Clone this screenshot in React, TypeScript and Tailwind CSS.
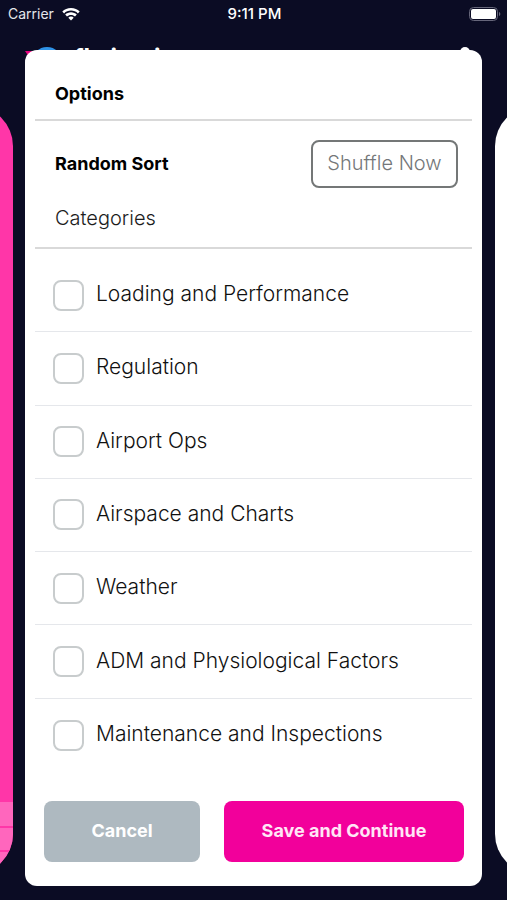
import { FC, useState } from 'react';

const categories = [
  'Loading and Performance',
  'Regulation',
  'Airport Ops',
  'Airspace and Charts',
  'Weather',
  'ADM and Physiological Factors',
  'Maintenance and Inspections',
];


// ~ ~ ~ ~ ~ ~ ~ ~ ~ ~ ~ ~ ~ ~ ~ ~ ~ ~ ~ ~ ~ ~ Status bar

const StatusBar:FC = () => (
  <div className="grid grid-cols-3 items-center h-7 pl-2 pr-1.5 text-sm text-white">
    <div className="flex items-center gap-2">
      <span className="text-gray-200">Carrier</span>
      <svg viewBox="0 0 18 13" className="w-[18px] h-[13px]" fill="currentColor" aria-hidden="true">
        <path d="M9 0C5.500 0 2.400 1.300 0.300 3.500L2.100 5.400C3.900 3.600 6.300 2.600 9 2.600s5.100 1 6.900 2.800l1.800-1.900C15.600 1.300 12.500 0 9 0z" />
        <path d="M9 4.300c-2.300 0-4.300.9-5.800 2.300L5 8.500c1-1 2.400-1.600 4-1.600s3 .6 4 1.600l1.800-1.900C13.300 5.200 11.300 4.300 9 4.300z" />
        <path d="M9 8.600c-1.100 0-2 .4-2.700 1.100L9 12.600l2.700-2.900C11 9 10.100 8.600 9 8.600z" />
      </svg>
    </div>
    <span className="text-center text-[15px] font-medium">9:11 PM</span>
    <svg viewBox="0 0 32 15" className="w-8 h-[15px] justify-self-end" aria-hidden="true">
      <rect x="0.500" y="0.500" width="28" height="13" rx="4" fill="none" stroke="#66667a" />
      <rect x="2" y="2" width="25" height="10" rx="2" fill="#fff" />
      <path d="M30 5v4c.8-.3 1.300-1 1.300-2s-.5-1.700-1.300-2z" fill="#66667a" />
    </svg>
  </div>
);


// ~ ~ ~ ~ ~ ~ ~ ~ ~ ~ ~ ~ ~ ~ ~ ~ ~ ~ ~ ~ ~ ~ Card deck behind the dialog

const Deck:FC = () => (
  <div className="flex flex-1 flex-col">
    <header className="flex items-center justify-between h-14 pl-6 pr-7">
      <div className="flex items-center gap-3">
        <svg viewBox="0 0 38 36" className="w-[38px] h-9" aria-hidden="true">
          <path d="M1 13h10L7 22z" fill="#e6007e" />
          <circle cx="23" cy="24" r="15" fill="#2f93e8" />
        </svg>
        <span className="pt-1 text-2xl font-bold text-white">fly institute</span>
      </div>
      <svg viewBox="0 0 28 28" className="size-7" fill="#fff" aria-hidden="true">
        <circle cx="14" cy="10" r="5" />
        <path d="M4 26c0-6 4-9 10-9s10 3 10 9z" />
      </svg>
    </header>
    <div className="flex flex-1 justify-between pt-[22px] pb-[26px]">
      <div className="-ml-[83px] flex w-24 flex-col justify-end overflow-hidden rounded-[40px] bg-[#ff36a8]">
        <div className="h-6 bg-[#ff66bd]" />
        <div className="h-6 border-t-2 border-[#ff36a8] bg-[#ff66bd]" />
        <div className="h-6 border-t-2 border-[#ff36a8] bg-[#ff66bd]" />
      </div>
      <div className="-mr-[84px] w-24 rounded-[40px] bg-white" />
    </div>
  </div>
);


// ~ ~ ~ ~ ~ ~ ~ ~ ~ ~ ~ ~ ~ ~ ~ ~ ~ ~ ~ ~ ~ ~ Options dialog

const OptionsDialog:FC = () => {
  const [selected, setSelected] = useState<string[]>([]);

  const toggle = (name: string) => {
    setSelected(selected.includes(name)
      ? selected.filter(item => item !== name)
      : [...selected, name]);
  };

  return (
    <form
      role="dialog"
      aria-labelledby="options-title"
      className="absolute inset-x-[25px] top-[50px] bottom-[14px] flex flex-col rounded-xl bg-white px-[10px] text-black"
      onSubmit={e => e.preventDefault()}
      >
      <h1 id="options-title" className="border-b-2 border-[#d9d9d9] px-5 pt-8 pb-[13px] text-lg leading-6 font-bold">
        Options
      </h1>

      <div className="flex items-center justify-between pt-[19px] pr-[14px] pl-5">
        <h2 className="text-lg leading-6 font-bold">Random Sort</h2>
        <button type="button" className="h-12 w-[147px] rounded-lg border-2 border-[#747777] pb-[2px] text-xl font-light text-[#747779]">
          Shuffle Now
        </button>
      </div>

      <fieldset className="flex flex-1 flex-col">
        <legend className="w-full border-b-2 border-[#d9d9d9] px-5 pt-4 pb-[15px] text-xl font-light text-[#1c1c1c]">
          Categories
        </legend>
        <ul className="grid flex-1 auto-rows-fr pt-[10px] divide-y divide-gray-200">
          {categories.map(name => (
            <li key={name} className="flex">
              <label className="flex flex-1 items-center gap-3 px-[18px] text-[21px] leading-7 font-light text-[#111]">
                <input
                  type="checkbox"
                  checked={selected.includes(name)}
                  onChange={() => toggle(name)}
                  className="size-[31px] appearance-none rounded-lg border-2 border-[#c8cccd] checked:bg-[#f2009b]"
                />
                <span className="pb-[2px]">{name}</span>
              </label>
            </li>
          ))}
        </ul>
      </fieldset>

      <div className="flex gap-6 pt-[29px] pr-2 pb-6 pl-[9px] text-lg font-bold text-white">
        <button type="button" className="h-[61px] flex-[156] rounded-lg bg-[#aeb9c0] pb-[2px]">Cancel</button>
        <button type="submit" className="h-[61px] flex-[240] rounded-lg bg-[#f2009b] pb-[2px] text-[#ffe6f6]">Save and Continue</button>
      </div>
    </form>
  );
};


// ~ ~ ~ ~ ~ ~ ~ ~ ~ ~ ~ ~ ~ ~ ~ ~ ~ ~ ~ ~ ~ ~ Page

export const App:FC = () => (
  <div className="relative flex min-h-screen flex-col overflow-hidden bg-[#0b0c24] font-['Inter',sans-serif]">
    <StatusBar />
    <Deck />
    <OptionsDialog />
  </div>
);

export default App;
